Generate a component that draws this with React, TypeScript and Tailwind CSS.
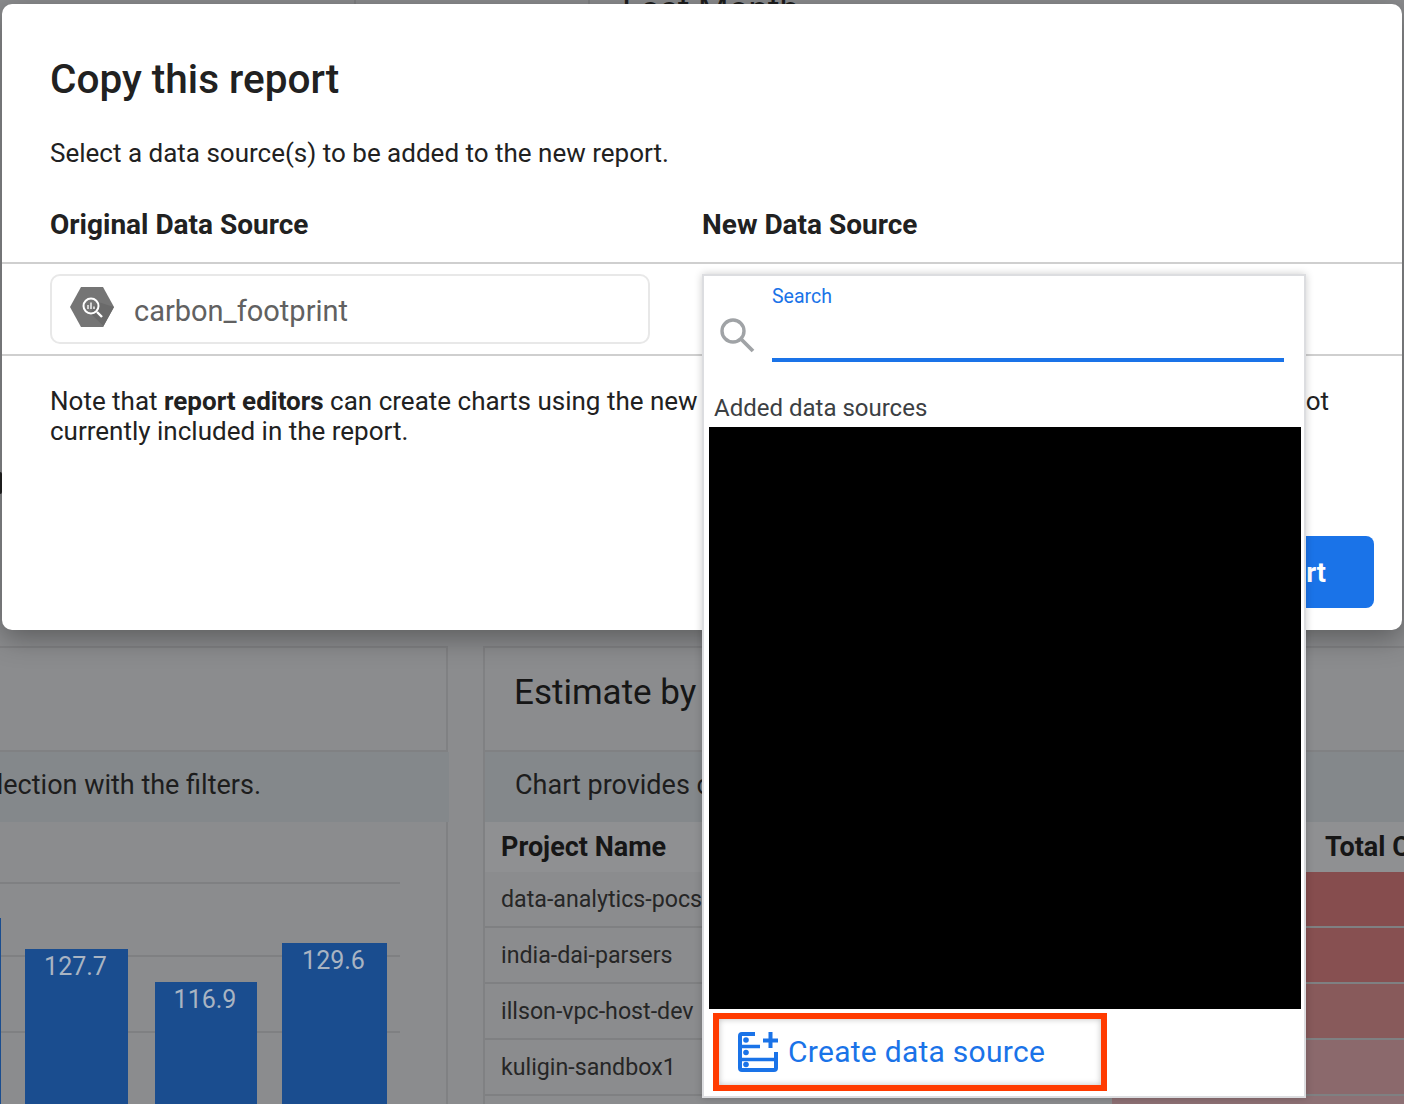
import React from "react";

const rows = [
  { name: "data-analytics-pocs", heat: "bg-[#864d4e]" },
  { name: "india-dai-parsers", heat: "bg-[#875051]" },
  { name: "illson-vpc-host-dev", heat: "bg-[#885a5b]" },
  { name: "kuligin-sandbox1", heat: "bg-[#8b696c]" },
  { name: "", heat: "bg-[#8d7074]" },
];

function Bar({ value, top, width, gap }: { value: string; top: string; width: string; gap: string }) {
  return (
    <div className={`${top} ${width} ${gap} bg-[#1a4d8f] text-center text-[25px] leading-[34px] pt-[1px] pr-[2px] text-[#a9b4c2] shrink-0 h-[200px]`}>
      {value}
    </div>
  );
}

function Background() {
  return (
    <div className="flex flex-col h-[1104px] w-[1404px] overflow-hidden bg-[#8b8c8e]">
      <div className="h-[646px] shrink-0 flex items-start">
        <div className="mt-[472px] w-[2px] h-[22px] bg-[#222222] rounded-r-full shrink-0" />
        <div className="ml-[352px] w-[236px] h-[40px] border-x-2 border-[#7f8082]" />
        <div className="ml-[32px] text-[35px] leading-[40px] -mt-[10px] text-[#1d1d1d]">Last Month</div>
      </div>
      <div className="flex flex-1">
        <div className="w-[448px] shrink-0 flex flex-col border-r-2 border-[#808183]">
          <div className="h-[106px] border-y-2 border-[#808183]" />
          <div className="h-[70px] -mr-[3px] bg-[#84888b] flex items-center justify-end pr-[188px] pb-[4px] text-[27px] text-[#1d1d1d] whitespace-nowrap">
            lection with the filters.
          </div>
          <div className="flex-1 relative pt-[60px]">
            <div className="w-[400px] h-[2px] bg-[#7f8082]" />
            <div className="w-[400px] h-[2px] bg-[#7f8082] mt-[71px]" />
            <div className="w-[400px] h-[2px] bg-[#7f8082] mt-[74px]" />
            <div className="absolute inset-x-0 top-0 flex items-start">
              <div className="w-[1px] h-[300px] mt-[96px] bg-[#1a4d8f]" />
              <Bar value="127.7" top="mt-[127px]" width="w-[103px]" gap="ml-[24px]" />
              <Bar value="116.9" top="mt-[160px]" width="w-[102px]" gap="ml-[27px]" />
              <Bar value="129.6" top="mt-[121px]" width="w-[105px]" gap="ml-[25px]" />
            </div>
          </div>
        </div>
        <div className="w-[35px] shrink-0" />
        <div className="flex-1 flex flex-col border-l-2 border-[#808183]">
          <div className="h-[106px] border-y-2 border-[#808183] flex items-center pl-[29px] pb-[12px] text-[35px] text-[#161616]">
            Estimate by Project
          </div>
          <div className="h-[70px] bg-[#84888b] flex items-center pl-[30px] pb-[4px] text-[27px] text-[#1d1d1d] whitespace-nowrap">
            Chart provides carbon footprint estimate by project based on your
          </div>
          <div className="h-[50px] flex items-center bg-[#8f9092] text-[27px] font-bold text-[#161616] whitespace-nowrap">
            <div className="w-[627px] pl-[16px]">Project Name</div>
            <div className="pl-[213px]">Total C</div>
          </div>
          {rows.map((r) => (
            <div key={r.name || "last"} className="h-[56px] shrink-0 flex border-b-2 border-[#7f8082] text-[23.2px] text-[#262626]">
              <div className="w-[627px] pl-[16px] flex items-center">{r.name}</div>
              <div className={`flex-1 ${r.heat}`} />
            </div>
          ))}
        </div>
      </div>
    </div>
  );
}

function BigQueryIcon() {
  return (
    <svg width="44" height="40" viewBox="0 0 44 40" className="shrink-0 -mt-[4px]">
      <polygon points="11,0 33,0 44,20 33,40 11,40 0,20" fill="#757575" />
      <polygon points="34,39.5 20,26 28,15 44,20 33,40" fill="#6a6a6a" />
      <circle cx="21" cy="19" r="7.5" fill="none" stroke="#fff" strokeWidth="2" />
      <path d="M27 25l5 5" stroke="#fff" strokeWidth="2.4" />
      <path d="M18 18v4M21 15.5v6.5M24 19.5v2.5" stroke="#ddd" strokeWidth="1.8" />
    </svg>
  );
}

function SearchIcon() {
  return (
    <svg width="36" height="36" viewBox="0 0 36 36" className="shrink-0">
      <circle cx="14" cy="14" r="11" fill="none" stroke="#a0a3a6" strokeWidth="3.4" />
      <path d="M22 22l12 12" stroke="#a0a3a6" strokeWidth="3.8" />
    </svg>
  );
}

function CreateIcon() {
  return (
    <svg width="40" height="40" viewBox="0 0 40 40" className="shrink-0">
      <path d="M17 2H4a2 2 0 0 0-2 2V36a2 2 0 0 0 2 2H36a2 2 0 0 0 2-2V20" fill="none" stroke="#1a73e8" strokeWidth="4" />
      <path d="M0 14.5H22M0 27.5H40" stroke="#1a73e8" strokeWidth="3.6" />
      <circle cx="8" cy="8" r="2.8" fill="#1a73e8" />
      <circle cx="8" cy="20.5" r="2.8" fill="#1a73e8" />
      <circle cx="8" cy="32.5" r="2.8" fill="#1a73e8" />
      <path d="M25 8.5H40M32.5 0V16" stroke="#1a73e8" strokeWidth="4" />
    </svg>
  );
}

function Dialog() {
  return (
    <div className="absolute left-[2px] top-[4px] w-[1400px] h-[626px] bg-white rounded-[10px] shadow-[0_8px_28px_rgba(0,0,0,0.35)] flex flex-col text-[#212121]">
      <h1 className="pl-[48px] pt-[50px] text-[40.5px] leading-[50px] font-medium">Copy this report</h1>
      <p className="pl-[48px] mt-[32px] text-[26px] leading-[34px]">Select a data source(s) to be added to the new report.</p>
      <div className="flex mt-[38px] text-[28px] leading-[34px] font-bold h-[54px] shrink-0">
        <div className="pl-[48px] w-[700px]">Original Data Source</div>
        <div>New Data Source</div>
      </div>
      <div className="h-[94px] border-y-2 border-[#cfcfcf] shrink-0 pl-[48px] pt-[10px]">
        <div className="w-[600px] h-[70px] border-2 border-[#e8e8e8] rounded-[10px] flex items-center pl-[18px] gap-[20px] text-[29px] text-[#616161]">
          <BigQueryIcon />
          <span className="pt-[5px]">carbon_footprint</span>
        </div>
      </div>
      <p className="pl-[48px] mt-[30px] text-[26px] leading-[30px] whitespace-nowrap">
        Note that <b className="font-bold">report editors</b> can create charts using the new data sources and any fields in all that data that are not
        <br />
        currently included in the report.
      </p>
      <div className="flex justify-end mt-auto pr-[28px] pb-[22px]">
        <button className="h-[72px] w-[300px] rounded-[8px] bg-[#1a73e8] text-white text-[27px] font-bold pr-[48px] pt-[3px] text-right">Copy Report</button>
      </div>
    </div>
  );
}

function Dropdown() {
  return (
    <div className="absolute left-[702px] top-[274px] w-[604px] h-[824px] bg-white border-2 border-[#dcdde0] shadow-[0_0_8px_rgba(0,0,0,0.2)] flex flex-col">
      <div className="flex items-start h-[100px] pl-[15px] pr-[20px]">
        <div className="mt-[41px] w-[53px]">
          <SearchIcon />
        </div>
        <div className="flex-1 pt-[9px]">
          <div className="text-[19.5px] leading-[24px] text-[#1a73e8]">Search</div>
          <div className="h-[4px] bg-[#1a73e8] mt-[49px]" />
        </div>
      </div>
      <div className="pl-[10px] mt-[17px] text-[24px] leading-[30px] text-[#3c4043] h-[34px]">Added data sources</div>
      <div className="ml-[5px] w-[592px] h-[582px] bg-black shrink-0" />
      <div className="ml-[9px] mt-[4px] w-[394px] h-[78px] border-[6px] border-[#ff3b00] shadow-[inset_0_0_6px_rgba(0,0,0,0.25)] flex items-center pl-[19px] gap-[10px] text-[30px] tracking-[0.27px] text-[#1a73e8]">
        <CreateIcon />
        <span className="-mt-[2px]">Create data source</span>
      </div>
    </div>
  );
}

export default function App() {
  return (
    <div className="relative w-[1404px] h-[1104px] overflow-hidden font-['Roboto',sans-serif]">
      <Background />
      <Dialog />
      <Dropdown />
    </div>
  );
}
